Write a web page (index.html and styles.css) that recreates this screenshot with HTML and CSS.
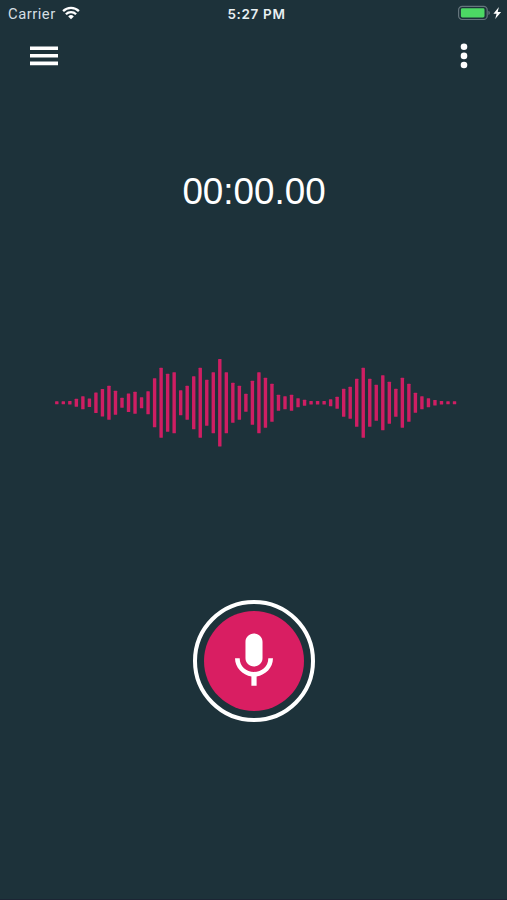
FILE: index.html
```html
<!DOCTYPE html>
<html lang="en">
<head>
<meta charset="utf-8">
<title>Recorder</title>
<link rel="stylesheet" href="styles.css">
</head>
<body>
<div class="screen">
  <div class="status">
    <div class="status-left">
      <span class="carrier">Carrier</span>
      <svg class="wifi" width="18" height="14" viewBox="0 0 18 14" fill="none" stroke="#fff" stroke-width="2.3">
        <path d="M1.1 5.1a11.2 11.2 0 0 1 15.8 0"/>
        <path d="M3.9 8.2a7.2 7.2 0 0 1 10.2 0"/>
        <path d="M9 13.2 6.2 10.4a4 4 0 0 1 5.6 0z" fill="#fff" stroke="none"/>
      </svg>
    </div>
    <div class="clock">5:27 PM</div>
    <div class="status-right">
      <svg width="46" height="16" viewBox="0 0 46 16">
        <rect x=".6" y="1.3" width="28.6" height="13.2" rx="3.6" fill="none" stroke="#65757c" stroke-width="1.2"/>
        <rect x="2.9" y="3.3" width="23.6" height="9.2" rx="1.4" fill="#4cd964"/>
        <path d="M30.4 5.8q1.5.6 1.5 2.1t-1.5 2.1z" fill="#65757c"/>
        <path d="M40.9 2 35.4 8.8h3.2l-1.4 5.3 5.9-7.1h-3.4z" fill="#fff"/>
      </svg>
    </div>
  </div>
  <div class="toolbar">
    <svg width="28" height="20" viewBox="0 0 28 20" fill="#fff"><path d="M0 .4h28v3.6H0zM0 8h28v3.6H0zM0 15.6h28v3.6H0z"/></svg>
    <svg width="8" height="26" viewBox="0 0 8 26" fill="#fff"><circle cx="4" cy="3.8" r="3.3"/><circle cx="4" cy="12.9" r="3.3"/><circle cx="4" cy="22" r="3.3"/></svg>
  </div>
  <div class="timer">00:00.00</div>
  <svg class="wave" id="wave" width="407" height="90" viewBox="0 0 407 90"></svg>
  <button class="record" aria-label="Record">
    <span class="disc">
      <svg class="mic" width="66" height="66" viewBox="0 0 24 24" fill="#fff"><path d="M12 14c1.75 0 3.1-1.34 3.1-3V5c0-1.66-1.35-3-3.1-3S8.9 3.34 8.9 5v6c0 1.66 1.35 3 3.1 3zm5.2-3c0 3-2.44 5-5.2 5S6.8 14 6.8 11H5.1c0 3.41 2.67 6.13 5.95 6.62V21h1.9v-3.38c3.28-.48 5.95-3.2 5.95-6.62h-1.7z"/></svg>
    </span>
  </button>
</div>
<script src="wave.js"></script>
</body>
</html>
```
FILE: styles.css
```css
body {
  margin: 0;
  background: #1d323a;
}
.screen {
  box-sizing: border-box;
  height: 900px;
  display: flex;
  flex-direction: column;
  align-items: center;
  background: #1d323a;
  border-bottom: 1px solid #1c2534;
  color: #fff;
  font-family: Inter, "Liberation Sans", sans-serif;
  overflow: hidden;
}
.status {
  box-sizing: border-box;
  width: 100%;
  height: 28px;
  padding: 0 3px 0 8px;
  display: grid;
  grid-template-columns: 1fr auto 1fr;
  align-items: center;
}
.status-left {
  display: flex;
  align-items: center;
  gap: 6px;
}
.carrier {
  font-family: Roboto, sans-serif;
  font-size: 14.8px;
  letter-spacing: 0.5px;
  color: #d5dfe3;
}
.wifi {
  margin-top: -2px;
}
.clock {
  font-size: 13.5px;
  font-weight: 600;
  letter-spacing: 0.65px;
  margin-left: 1px;
  color: #e8eff2;
}
.status-right {
  display: flex;
  justify-content: flex-end;
  margin-top: -2px;
}
.toolbar {
  box-sizing: border-box;
  width: 100%;
  height: 56px;
  padding: 0 39px 0 30px;
  display: flex;
  align-items: center;
  justify-content: space-between;
}
.timer {
  margin: 87px 0 0 1px;
  font-family: "Liberation Sans", sans-serif;
  font-size: 36.8px;
  line-height: 42px;
}
.wave {
  display: block;
  margin-top: 145px;
  fill: #cf1e63;
}
.record {
  box-sizing: border-box;
  width: 122px;
  height: 122px;
  margin: 152px 0 0 1px;
  padding: 0;
  border: 4px solid #fff;
  border-radius: 50%;
  background: none;
  display: flex;
  align-items: center;
  justify-content: center;
}
.disc {
  width: 100px;
  height: 100px;
  border-radius: 50%;
  background: #d91e62;
  display: flex;
  align-items: center;
  justify-content: center;
}
```
FILE: wave.js
```js
const levels = [
  3, 3, 3.5, 8, 13, 8.5, 20.5, 27.5, 34, 24, 10, 18.5, 22, 11, 23, 49,
  70, 58, 61, 25, 34, 53, 70, 46, 61, 87.5, 61, 40, 34, 18, 44, 61,
  50, 38, 16, 13, 16, 9, 6, 3.5, 3.5, 3.5, 7, 12, 28, 32, 48, 70,
  48, 36, 55, 42, 28, 50, 38, 20, 13, 9, 5.5, 3.5, 3, 3
];
const wave = document.getElementById('wave');
levels.forEach((level, i) => {
  const bar = document.createElementNS('http://www.w3.org/2000/svg', 'rect');
  bar.setAttribute('x', (5.1 + i * 6.52).toFixed(2));
  bar.setAttribute('y', 44.8 - level / 2);
  bar.setAttribute('width', 3.4);
  bar.setAttribute('height', level);
  bar.setAttribute('rx', 0.5);
  wave.appendChild(bar);
});
```
